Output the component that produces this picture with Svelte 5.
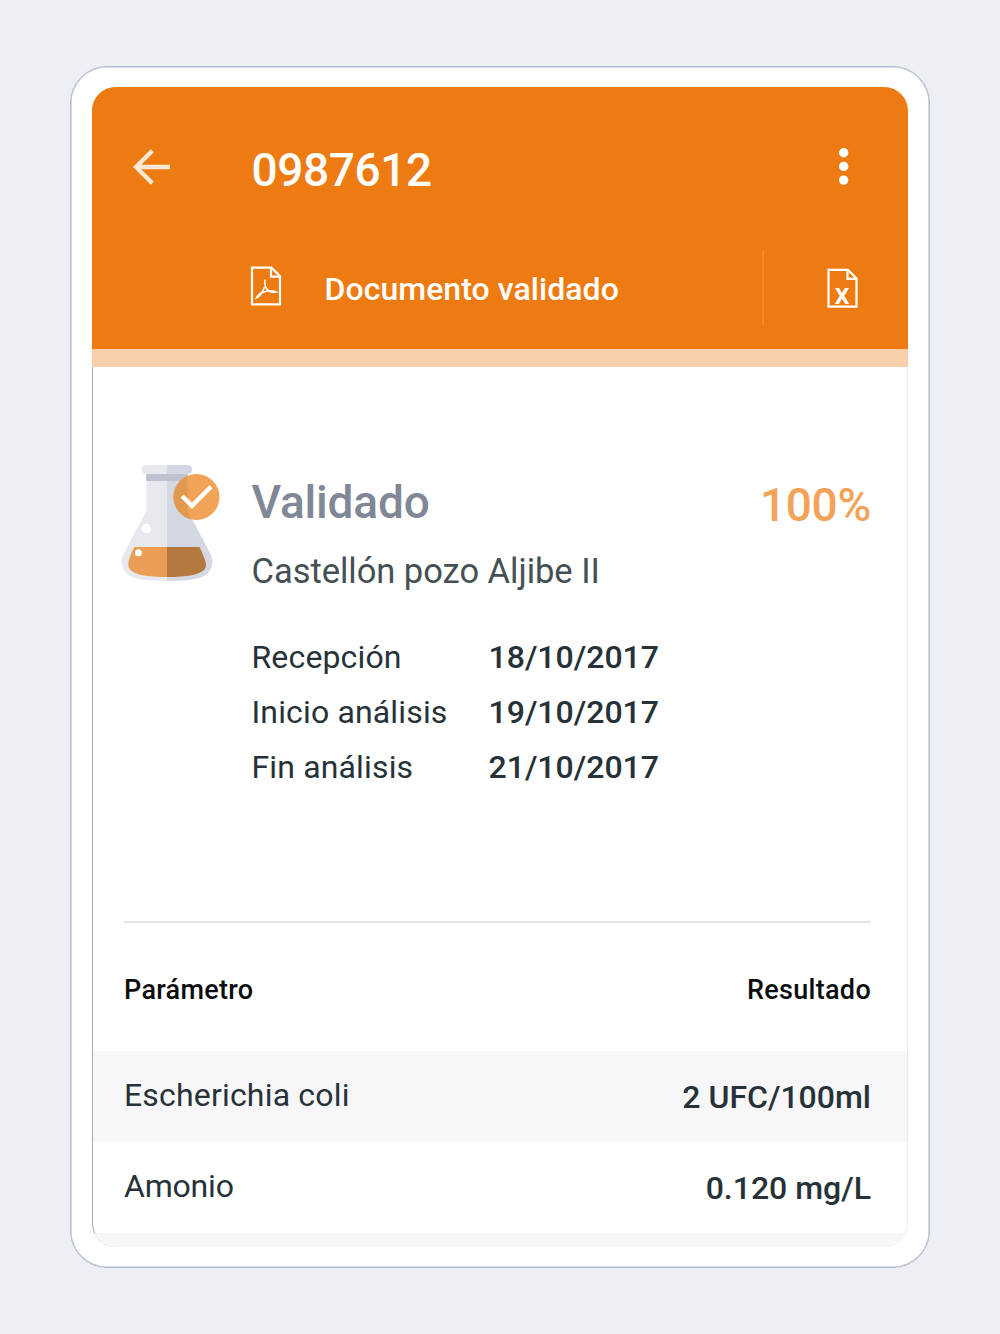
<script>
  let code = "0987612";

  let dates = [
    { label: "Recepción", value: "18/10/2017" },
    { label: "Inicio análisis", value: "19/10/2017" },
    { label: "Fin análisis", value: "21/10/2017" }
  ];

  let results = [
    { name: "Escherichia coli", value: "2 UFC/100ml", cls: "odd" },
    { name: "Amonio", value: "0.120 mg/L", cls: "even" }
  ];
</script>

<div class="page">
  <div class="device">
    <main class="screen">
      <header>
        <div class="topbar">
          <button class="back" aria-label="Volver">
            <svg width="38" height="38" viewBox="0 0 38 38">
              <path d="M37 19H4M19.3 2.7L3 19l16.3 16.3" />
            </svg>
          </button>
          <h1>{code}</h1>
          <button class="menu" aria-label="Menú">
            <svg width="10" height="38" viewBox="0 0 10 38">
              <circle cx="4.7" cy="4.7" r="4.7" />
              <circle cx="4.7" cy="18.4" r="4.7" />
              <circle cx="4.7" cy="32.1" r="4.7" />
            </svg>
          </button>
        </div>

        <div class="docbar">
          <svg class="pdf" width="32" height="40" viewBox="0 0 32 40">
            <path class="sheet" d="M2 1.7H21.5L30 10.2V38.4H2Z" />
            <path class="sheet" d="M21 1.7V10.7H30" />
            <path class="curl" d="M14.9 13.5C14.4 18.5 15 21.6 18 24.3C20 26.2 23 26.3 26 25.9C22 24.2 16 25 12.5 26.4C9.5 27.6 7.5 29.4 6.3 32C10 30.3 13 25.5 14.5 21" />
          </svg>
          <span class="doc">Documento validado</span>
          <span class="divider"></span>
          <svg class="xls" width="32" height="50" viewBox="0 -5 32 50">
            <path class="sheet" d="M1.5 1.9H21L29.5 10.4V38.6H1.5Z" />
            <path class="sheet" d="M20.5 1.9V10.9H29.5" />
            <text x="15" y="36">x</text>
          </svg>
        </div>
      </header>
      <div class="strip"></div>

      <section class="summary">
        <svg class="flask" width="100" height="120" viewBox="0 0 100 120">
          <path fill="#e7e9ef" d="M26.3 7H47V119C20 119 10 116 5.5 110C0.5 104 0.5 98 4.5 90L26.3 49Z" />
          <path fill="#d3d8e3" d="M47 7H67.7V49L89.5 90C93.5 98 93.5 104 88.5 110C84 116 74 119 47 119Z" />
          <path fill="#bfc3d1" d="M26.3 10H67.7V19H26.3Z" />
          <path fill="#e7e9ef" d="M47 3H26.3Q21.8 3 21.8 7.5T26.3 12H47Z" />
          <path fill="#d3d8e3" d="M47 3H67.5Q72 3 72 7.5T67.5 12H47Z" />
          <path fill="#eb9d55" d="M14.3 85H47V115C26 115 15 112.5 10.5 108C6.5 103.5 8 98 14.3 85Z" />
          <path fill="#b5793f" d="M47 85H79.5C85.5 98 88 103.5 84 108C79 112.5 68 115 47 115Z" />
          <circle cx="26.3" cy="66.7" r="4.7" fill="#fff" />
          <circle cx="18.4" cy="90.7" r="3.5" fill="#fff" />
          <circle cx="76.5" cy="35" r="23" fill="#f3a357" />
          <path fill="#e3984f" d="M67.7 13.7A23 23 0 0 0 71.5 57.4L67.7 50Z" />
          <path d="M62 34L72 43.8L91 24.8" fill="none" stroke="#fff" stroke-width="4.4" />
        </svg>
        <div class="info">
          <div class="state">
            <h2>Validado</h2>
            <span class="percent">100%</span>
          </div>
          <p class="place">Castellón pozo Aljibe II</p>
          <dl>
            {#each dates as date}
              <div class="date">
                <dt>{date.label}</dt>
                <dd>{date.value}</dd>
              </div>
            {/each}
          </dl>
        </div>
      </section>

      <div class="head">
        <span>Parámetro</span>
        <span>Resultado</span>
      </div>

      {#each results as row}
        <div class="row {row.cls}">
          <span class="name">{row.name}</span>
          <span class="value">{row.value}</span>
        </div>
      {/each}
      <div class="row odd"></div>
    </main>
  </div>
</div>

<style>
  :global(body) {
    background: #eeeff4;
  }

  .page {
    box-sizing: border-box;
    width: 1000px;
    height: 1334px;
    padding: 66px 70px;
    font-family: Roboto, sans-serif;
    color: #263238;
    white-space: nowrap;
    overflow: hidden;
  }

  .device {
    box-sizing: border-box;
    height: 1202px;
    padding: 20px 21px;
    border: 1px solid #b1bacd;
    border-radius: 37px;
    background: #fff;
    box-shadow: inset 0 0 0 0.5px #b1bacd;
  }

  .screen {
    height: 1160px;
    border-radius: 24px;
    overflow: hidden;
    background: #fff;
    box-shadow: inset 1px 0 0 #a5a8ac, inset -1px 0 0 #ecedf0;
  }

  h1,
  h2,
  p,
  dl,
  dd {
    margin: 0;
  }

  h1,
  h2,
  .percent,
  dd,
  .doc,
  .head,
  .value {
    font-weight: 500;
  }

  button {
    display: flex;
    padding: 0;
    border: 0;
    background: none;
  }

  /* orange header */
  header {
    box-sizing: border-box;
    height: 262px;
    padding-top: 50px;
    background: #ee7b11;
    color: #fff;
  }

  .topbar {
    display: flex;
    align-items: center;
    height: 60px;
    padding: 0 59px 0 40.5px;
  }

  .back path {
    fill: none;
    stroke: #ffe9d5;
    stroke-width: 4.4;
  }

  .menu {
    margin-left: auto;
  }

  .menu circle {
    fill: #fff;
  }

  h1 {
    margin-left: 81px;
    padding-top: 6px;
    font-size: 46px;
    line-height: 54px;
    letter-spacing: -0.4px;
  }

  .docbar {
    display: flex;
    align-items: center;
    height: 75px;
    margin-top: 53px;
    padding: 0 49px 0 158px;
  }

  .sheet {
    fill: none;
    stroke: #fff;
    stroke-width: 2.2;
  }

  .curl {
    fill: none;
    stroke: #fff;
    stroke-width: 1.6;
  }

  .pdf {
    margin-bottom: 4px;
  }

  .xls {
    margin: 1px 0 0 auto;
  }

  .xls text {
    fill: #fff;
    font-size: 30px;
    font-weight: 500;
    text-anchor: middle;
  }

  .doc {
    width: 437px;
    margin-left: 42.5px;
    padding-top: 2px;
    font-size: 32px;
    letter-spacing: 0.05px;
  }

  .divider {
    width: 2px;
    height: 75px;
    background: #f08c2f;
  }

  .strip {
    height: 18px;
    background: #f9d0ab;
  }

  /* sample summary */
  .summary {
    display: flex;
    box-sizing: border-box;
    height: 556px;
    margin: 0 37px 0 32px;
    padding-top: 95px;
    border-bottom: 2px solid #e3e4e7;
  }

  .flask {
    flex: none;
    margin-left: -4px;
  }

  .info {
    flex: 1;
    margin-left: 31.5px;
  }

  .state {
    display: flex;
    justify-content: space-between;
    height: 80px;
    padding-top: 13px;
    box-sizing: border-box;
  }

  h2 {
    font-size: 46px;
    line-height: 54px;
    letter-spacing: -0.2px;
    color: #808796;
  }

  .percent {
    padding-top: 3px;
    font-size: 46px;
    line-height: 54px;
    letter-spacing: -0.3px;
    color: #f3a357;
  }

  .place {
    height: 88.4px;
    font-size: 34.5px;
    line-height: 58px;
    letter-spacing: -0.03px;
    color: #455054;
  }

  .date {
    display: flex;
    height: 54.7px;
    font-size: 32px;
    line-height: 54.7px;
  }

  dt {
    width: 237px;
    letter-spacing: 0.15px;
  }

  /* results table */
  .head {
    display: flex;
    justify-content: space-between;
    height: 128px;
    padding: 0 37px 0 32px;
    font-size: 27px;
    line-height: 134px;
    letter-spacing: 0.3px;
    color: #0b0d0e;
  }

  .row {
    display: flex;
    justify-content: space-between;
    height: 91px;
    margin: 0 1px;
    padding: 0 36px 0 31px;
    font-size: 32px;
    line-height: 89px;
  }

  .odd {
    background: #f7f7fa;
  }

  .odd .name {
    letter-spacing: 0.18px;
  }

  .even .name {
    letter-spacing: -0.2px;
  }

  .value {
    padding-top: 2px;
  }
</style>
